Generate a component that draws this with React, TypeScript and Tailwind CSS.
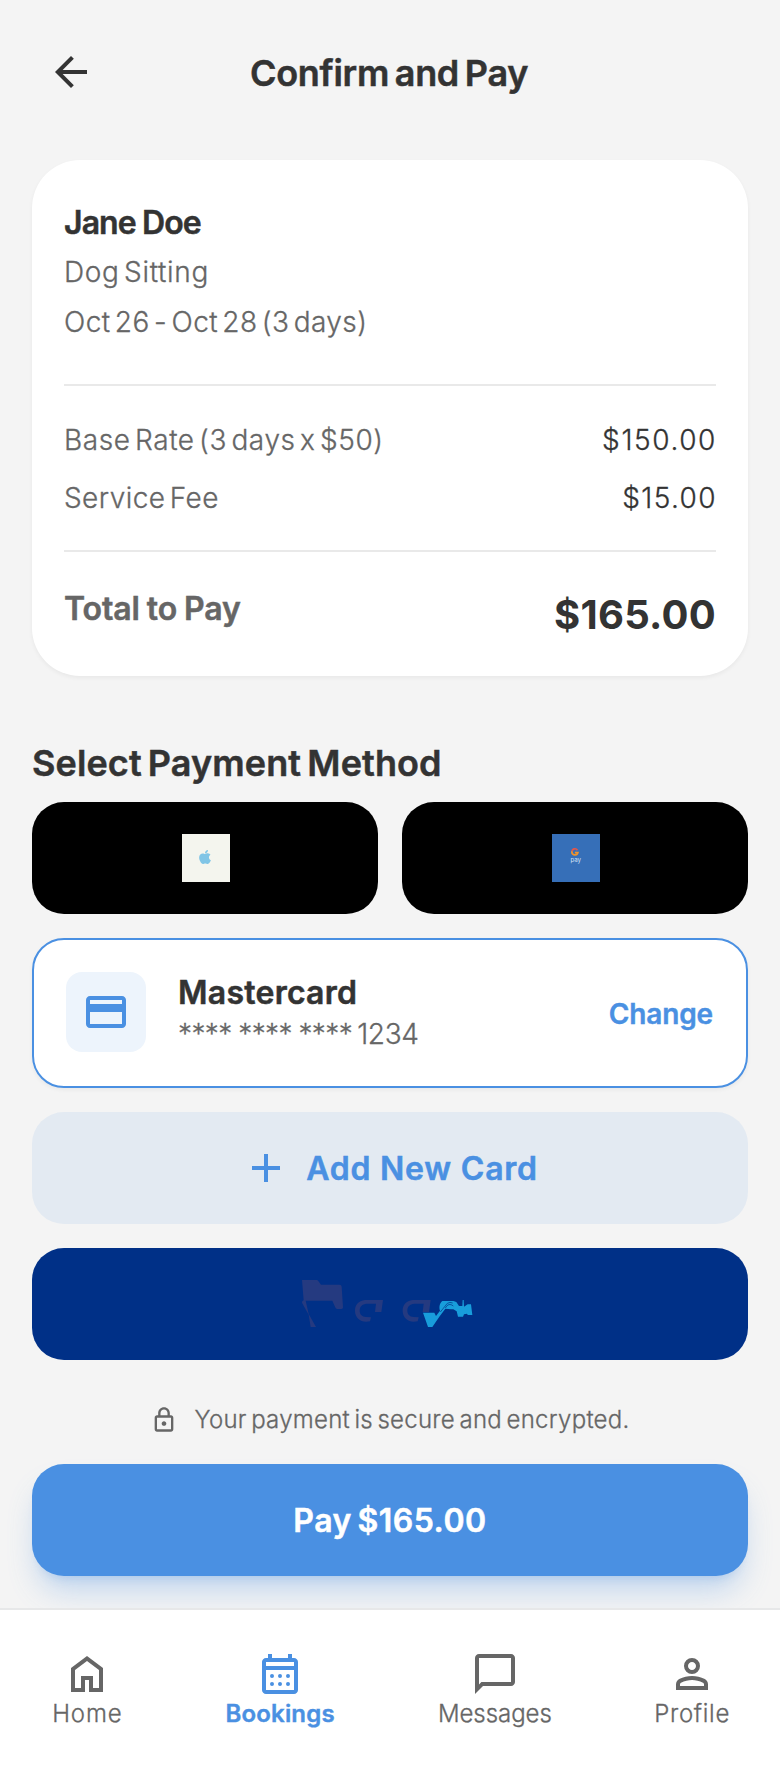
import React from "react";
import { FaApple } from "react-icons/fa";

const ICONS = {
  back: "M20 11H7.83l5.59-5.59L12 4l-8 8 8 8 1.41-1.41L7.83 13H20v-2z",
  card: "M20 4H4c-1.11 0-1.99.89-1.99 2L2 18c0 1.11.89 2 2 2h16c1.11 0 2-.89 2-2V6c0-1.11-.89-2-2-2zm0 14H4v-6h16v6zm0-10H4V6h16v2z",
  add: "M19 13h-6v6h-2v-6H5v-2h6V5h2v6h6v2z",
  lock: "M18 8h-1V6c0-2.76-2.24-5-5-5S7 3.24 7 6v2H6c-1.1 0-2 .9-2 2v10c0 1.1.9 2 2 2h12c1.1 0 2-.9 2-2V10c0-1.1-.9-2-2-2zM9 6c0-1.66 1.34-3 3-3s3 1.34 3 3v2H9V6zm9 14H6V10h12v10zm-6-3c1.1 0 2-.9 2-2s-.9-2-2-2-2 .9-2 2 .9 2 2 2z",
  home: "M6 19h3v-6h6v6h3v-9l-6-4.5L6 10v9zm-2 2V9l8-6 8 6v12h-7v-6h-2v6H4z",
  calendar:
    "M5 22q-.825 0-1.412-.587T3 20V6q0-.825.588-1.412T5 4h1V2h2v2h8V2h2v2h1q.825 0 1.413.588T21 6v14q0 .825-.587 1.413T19 22H5Zm0-2h14V10H5v10ZM5 8h14V6H5v2ZM8 12a1 1 0 1 0 0 2 1 1 0 0 0 0-2zm4 0a1 1 0 1 0 0 2 1 1 0 0 0 0-2zm4 0a1 1 0 1 0 0 2 1 1 0 0 0 0-2zM8 16a1 1 0 1 0 0 2 1 1 0 0 0 0-2zm4 0a1 1 0 1 0 0 2 1 1 0 0 0 0-2zm4 0a1 1 0 1 0 0 2 1 1 0 0 0 0-2z",
  chat: "M20 2H4c-1.1 0-2 .9-2 2v18l4-4h14c1.1 0 2-.9 2-2V4c0-1.1-.9-2-2-2zm0 14H5.2L4 17.2V4h16v12z",
  person:
    "M12 12q-1.65 0-2.825-1.175T8 8q0-1.65 1.175-2.825T12 4q1.65 0 2.825 1.175T16 8q0 1.65-1.175 2.825T12 12Zm-8 8v-2.8q0-.85.438-1.563T5.6 14.55q1.55-.775 3.15-1.163T12 13q1.65 0 3.25.388t3.15 1.162q.725.375 1.163 1.088T20 17.2V20H4Zm2-2h12v-.8q0-.275-.138-.5t-.362-.35q-1.35-.675-2.725-1.013T12 15q-1.4 0-2.775.338T6.5 16.35q-.225.125-.363.35T6 17.2v.8Zm6-8q.825 0 1.413-.588T14 8q0-.825-.588-1.413T12 6q-.825 0-1.413.588T10 8q0 .825.588 1.413T12 10Z",
};

function Icon({ name, className = "size-12" }: { name: keyof typeof ICONS; className?: string }) {
  return (
    <svg viewBox="0 0 24 24" fill="currentColor" fillRule="evenodd" className={`shrink-0 ${className}`}>
      <path d={ICONS[name]} />
    </svg>
  );
}

function GPayLogo() {
  return (
    <svg viewBox="0 0 48 48" className="ml-0.5 size-12 bg-[#366fb8]">
      <path d="M25.4 16.2A2.9 2.9 0 0 0 20 17.6" fill="none" stroke="#e2574a" strokeWidth="1.7" />
      <path d="M20 17.2a2.9 2.9 0 0 0 5.9 1.4h-3" fill="none" stroke="#f0932b" strokeWidth="1.7" />
      <text x="18.4" y="27.6" fontSize="6.2" fontFamily="Inter, sans-serif" fill="#d3e2f6">
        pay
      </text>
    </svg>
  );
}

const LOOP =
  "M279 90H225C205 92 195 105 195 122C195 142 210 155 228 155L240 154L243 142L228 141C215 140 209 132 209 122C209 110 216 102 230 101H258L255 126H274Z";

function PayPalMark() {
  return (
    <svg viewBox="0 -3 600 210" className="h-[70px] w-[200px]">
      <g fill="#253a80">
        <path d="M36 30H80Q84 30 87 36L93 44H148Q155 44 155 50L159 112Q159 117 154 117H142Q137 117 135 110L127 92H47L56 132L78 171H62L56 134L36 98Q36 92 41 91Z" />
        <path d={LOOP} />
        <path d={LOOP} transform="translate(143 0)" />
      </g>
      <g transform="translate(300 60)">
        <path
          fill="#189ddb"
          d="M99 68H133L138 78L150 62C146 50 150 38 157 33H190L199 36L207 48L217 48L218 30H221L222 50L233 43H243L247 75H234L230 71L222 73L219 80H204L200 64L190 58L183 58L166 56L148 80L127 111H114Z"
        />
        <path fill="none" stroke="#003087" strokeWidth="2" d="M151 66L172 40Q180 35 188 39M166 54Q176 36 190 48" />
      </g>
    </svg>
  );
}

const ROWS = [
  { label: "Base Rate (3 days x $50)", value: "$150.00", l: "tracking-[0.58px]", v: "tracking-[1.6px] -mr-[1px]" },
  { label: "Service Fee", value: "$15.00", l: "tracking-[0.43px]", v: "tracking-[1.42px] -mr-[1px]" },
];

const TABS = [
  { label: "Home", icon: "home", cls: "w-[72px] text-[#666]", t: "pl-px tracking-[0.9px] font-light [-webkit-text-stroke:0.3px]" },
  { label: "Bookings", icon: "calendar", cls: "w-[111px] text-[#4a90e2]", t: "tracking-[0.2px] font-semibold [-webkit-text-stroke:0.4px]" },
  { label: "Messages", icon: "chat", cls: "w-[114px] pl-px text-[#666]", t: "tracking-[-0.05px] font-light [-webkit-text-stroke:0.3px]" },
  { label: "Profile", icon: "person", cls: "w-[76px] pl-0.5 text-[#666]", t: "tracking-[0.68px] font-light [-webkit-text-stroke:0.3px]" },
] as const;

export default function App() {
  return (
    <div className="flex h-[1768px] w-[780px] flex-col bg-[#f4f4f4] font-['Inter',sans-serif] whitespace-nowrap text-[#333]">
      <header className="grid h-36 shrink-0 grid-cols-[48px_1fr_48px] items-center pr-[49px] pl-[47px]">
        <button type="button">
          <Icon name="back" />
        </button>
        <h1 className="pt-0.5 text-center text-[36px] leading-[54px] font-semibold tracking-[-0.3px] [word-spacing:-3px] [-webkit-text-stroke:0.5px]">
          Confirm and Pay
        </h1>
      </header>

      <main className="flex flex-col px-8 pt-4">
        <section className="rounded-[48px] bg-white px-8 pt-[39px] pb-[30px] shadow-[0_2px_4px_rgba(0,0,0,0.05)]">
          <h2 className="text-[32px] leading-[48px] font-semibold tracking-[-0.9px] [word-spacing:-1px] [-webkit-text-stroke:0.5px]">
            Jane Doe
          </h2>
          <div className="text-[28px] leading-[50px] font-light text-[#666] [word-spacing:-4px] [-webkit-text-stroke:0.3px]">
            <p className="tracking-[0.66px]">Dog Sitting</p>
            <p className="tracking-[0.43px]">Oct 26 - Oct 28 (3 days)</p>
          </div>
          <div className="mt-[37px] flex flex-col gap-4 border-y-2 border-[#e9e9e9] pt-[33px] pb-[31px]">
            {ROWS.map((row) => (
              <div
                key={row.label}
                className="flex justify-between text-[28px] leading-[42px] font-light [-webkit-text-stroke:0.3px]"
              >
                <span className={`text-[#666] [word-spacing:-4px] ${row.l}`}>{row.label}</span>
                <span className={row.v}>{row.value}</span>
              </div>
            ))}
          </div>
          <div className="flex items-start justify-between pt-8">
            <span className="pt-px text-[32px] leading-[48px] font-semibold tracking-[-0.1px] text-[#666] [word-spacing:-1px] [-webkit-text-stroke:0.5px]">
              Total to Pay
            </span>
            <span className="text-[40px] leading-[62px] font-bold tracking-[0.25px]">$165.00</span>
          </div>
        </section>

        <h2 className="mt-[60px] text-[36px] leading-[54px] font-semibold tracking-[0.1px] [word-spacing:-3px] [-webkit-text-stroke:0.5px]">
          Select Payment Method
        </h2>

        <div className="mt-3 grid grid-cols-2 gap-6">
          <button type="button" className="flex h-28 items-center justify-center rounded-[32px] bg-black">
            <span className="ml-0.5 flex size-12 items-center justify-center bg-[#f4f5ee] pr-[3px] pb-0.5 text-[#80c5e6]">
              <FaApple className="size-4" />
            </span>
          </button>
          <button type="button" className="flex h-28 items-center justify-center rounded-[32px] bg-black">
            <GPayLogo />
          </button>
        </div>

        <div className="mt-6 flex h-[150px] items-center rounded-[32px] border-2 border-[#4a90e2] bg-white px-8 shadow-[0_2px_4px_rgba(0,0,0,0.05)]">
          <div className="mb-0.5 flex size-20 items-center justify-center rounded-2xl bg-[#edf4fc] text-[#4a90e2]">
            <Icon name="card" />
          </div>
          <div className="ml-8 flex-1">
            <p className="pt-px text-[32px] leading-[42px] font-semibold tracking-[0.25px] [-webkit-text-stroke:0.5px]">
              Mastercard
            </p>
            <p className="flex gap-[5px] text-[28px] leading-[41px] font-light text-[#666] [-webkit-text-stroke:0.3px]">
              <span className="tracking-[-0.6px] [word-spacing:-0.7px]">**** **** ****</span>
              <span className="tracking-[-0.32px]">1234</span>
            </p>
          </div>
          <button
            type="button"
            className="pt-0.5 pr-px text-[28px] leading-[42px] font-semibold tracking-[-0.15px] text-[#4a90e2] [-webkit-text-stroke:0.4px]"
          >
            Change
          </button>
        </div>

        <button
          type="button"
          className="mt-6 flex h-28 items-center justify-center gap-4 rounded-[32px] bg-[#e3eaf2] text-[32px] font-semibold tracking-[0.78px] text-[#4a90e2] [-webkit-text-stroke:0.5px]"
        >
          <svg viewBox="0 0 24 24" fill="currentColor" strokeWidth="0" className="size-12">
            <path d={ICONS.add} />
          </svg>
          <span className="pt-px">Add New Card</span>
        </button>

        <button type="button" className="mt-6 flex h-28 items-center justify-center rounded-[32px] bg-[#003087]">
          <PayPalMark />
        </button>

        <div className="mt-[42px] flex h-9 items-center justify-center gap-4 text-[24px] font-light tracking-[0.26px] text-[#666] [word-spacing:-2.5px] [-webkit-text-stroke:0.3px]">
          <Icon name="lock" className="size-7" />
          Your payment is secure and encrypted.
        </div>

        <button
          type="button"
          className="mt-[26px] flex h-28 items-center justify-center rounded-[32px] bg-[#4a90e2] pt-0.5 text-[32px] font-semibold tracking-[0.5px] text-white shadow-[0_20px_30px_-6px_rgba(74,144,226,0.3),0_8px_12px_-8px_rgba(74,144,226,0.3)] [word-spacing:-3px] [-webkit-text-stroke:0.5px]"
        >
          Pay $165.00
        </button>
      </main>

      <nav className="mt-auto flex h-40 shrink-0 items-start justify-around border-t-2 border-[#e7e8e9] bg-white/95 pt-10">
        {TABS.map((tab) => (
          <a key={tab.label} className={`flex flex-col items-center ${tab.cls}`}>
            <Icon name={tab.icon} />
            <span className={`text-[24px] leading-[31px] ${tab.t}`}>{tab.label}</span>
          </a>
        ))}
      </nav>
    </div>
  );
}
